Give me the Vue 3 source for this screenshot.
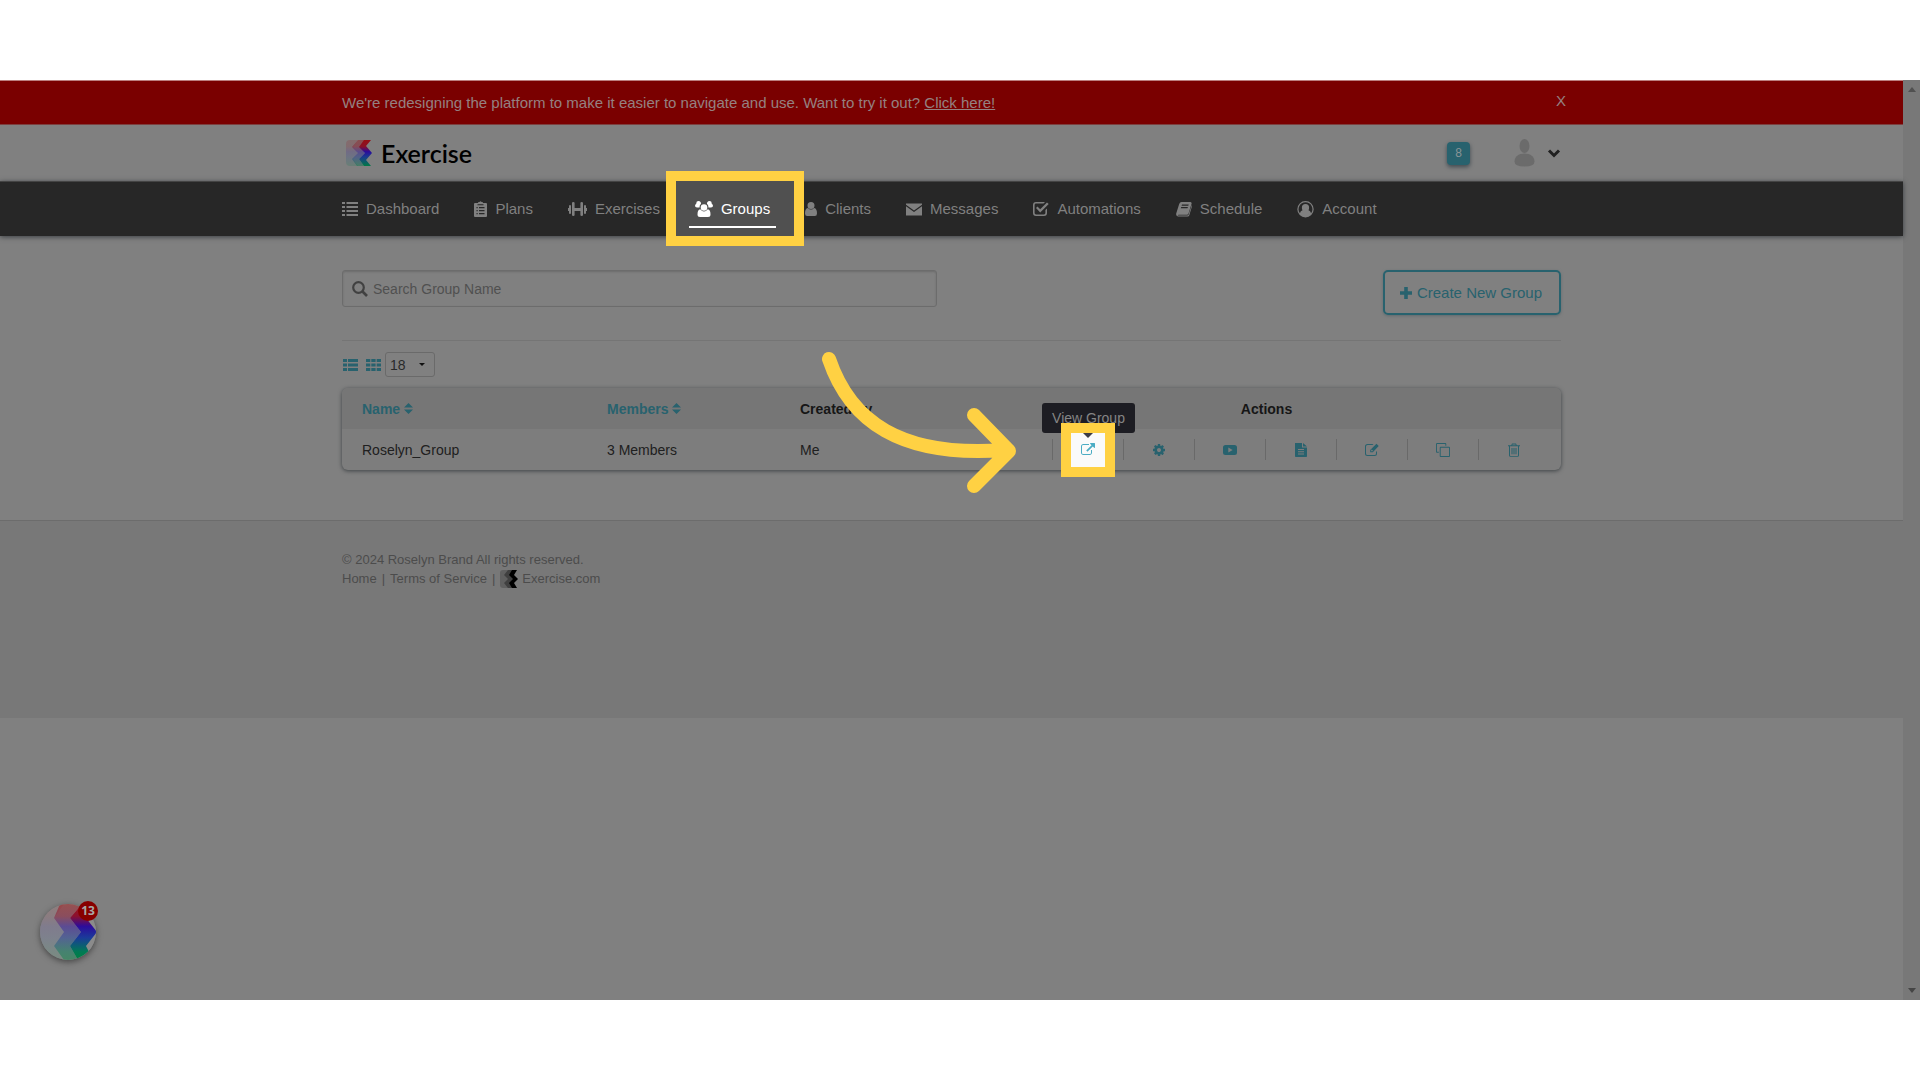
<script setup>
import { ref } from 'vue'

const search = ref('')
const perPage = ref('18')

const navItems = [
  { label: 'Dashboard', w: 16, icon: 'M0 1h3v2H0zM4.500 1H16v2H4.500zM0 5h3v2H0zM4.500 5H16v2H4.500zM0 9h3v2H0zM4.500 9H16v2H4.500zM0 13h3v2H0zM4.500 13H16v2H4.500z' },
  { label: 'Plans', w: 13, icon: 'M1 2h3.200V1h1.300a1.200 1.200 0 0 1 2 0h1.300v1H12a1 1 0 0 1 1 1v12a1 1 0 0 1-1 1H1a1 1 0 0 1-1-1V3a1 1 0 0 1 1-1zM2.500 6v1.200h1.200V6zM5 6v1.200h5.500V6zM2.500 9v1.200h1.200V9zM5 9v1.200h5.500V9zM2.500 12v1.200h1.200V12zM5 12v1.200h5.500V12zM3.500 3.300v1h6v-1z' },
  { label: 'Exercises', w: 19, icon: 'M0 7h1V5q0-1 1-1t1 1v7q0 1-1 1t-1-1v-2H0zM4 2q0-1 1.300-1T6.600 2v5h5.800V2q0-1 1.300-1T15 2v12q0 1-1.300 1T12.400 14V10H6.600v4q0 1-1.300 1T4 14zM16 5q0-1 1-1t1 1v2h1v3h-1v2q0 1-1 1t-1-1z' },
  { label: 'Groups', w: 18, active: true, icon: 'M9 3.200a3.300 3.300 0 1 1 0 6.600a3.300 3.300 0 0 1 0-6.600zM3.600 0a2.400 2.400 0 0 1 2.300 3.100q-1.600 1.400-1.300 3.400H2Q0 6.500 0 4.800Q.2 3 1.300 2.700A2.400 2.400 0 0 1 3.600 0zM14.400 0a2.400 2.400 0 0 0-2.300 3.100q1.600 1.400 1.300 3.400H16q2 0 2-1.700q-.2-1.800-1.300-2.100A2.400 2.400 0 0 0 14.400 0zM5.200 8.300Q9 12.800 12.800 8.300Q15.500 8.600 15.500 13.500Q15.500 16 13 16H5Q2.500 16 2.500 13.500Q2.500 8.600 5.200 8.300z' },
  { label: 'Clients', w: 12, icon: 'M6 1a3.500 3.500 0 1 1 0 7a3.500 3.500 0 0 1 0-7zM2.700 7Q6 10.200 9.300 7Q12 7.500 12 12.500Q12 15 9.800 15H2.200Q0 15 0 12.500Q0 7.500 2.700 7z' },
  { label: 'Messages', w: 16, icon: 'M0 2.500h16v1.300L8 9.500L0 3.800zM0 5.300L8 11l8-5.700V14.500H0z' },
  { label: 'Automations', w: 16, icon: 'M3 1h9l-1.500 1.600H3A1.400 1.400 0 0 0 1.600 4v8A1.400 1.400 0 0 0 3 13.400h8a1.400 1.400 0 0 0 1.400-1.400V9L14 7.400V12a3 3 0 0 1-3 3H3a3 3 0 0 1-3-3V4a3 3 0 0 1 3-3zM3 7l1.500-1.500L7.200 8.200L14 1.500L15.700 3L7.200 11.500z' },
  { label: 'Schedule', w: 16, icon: 'M5.500 1h9q1.500.3 1 2l-3 9.500q-.5 1.300-1.800 1.300H2.500q-1 0-.8.700h9.500q1.200 0 1.500-1.200L15.800 4q.4.600.1 1.600l-2.600 8.600Q12.900 15.500 11.500 15.500H2Q-.3 15 .2 12.500L3.200 3Q3.900 1 5.500 1zM6 3.500l-.4 1.200h6.700l.4-1.200zM5.200 6l-.4 1.200h6.700l.4-1.200z' },
  { label: 'Account', w: 17, icon: 'M8.500 0a8.200 8.200 0 1 1 0 16.400A8.200 8.200 0 0 1 8.500 0zM8.500 1.300a6.900 6.900 0 0 0-5.600 10.900Q3.500 9.500 5.500 9.200Q4.800 8 4.900 6.500A3.600 3.600 0 0 1 12.100 6.500Q12.200 8 11.500 9.200Q13.500 9.500 14.100 12.200A6.900 6.900 0 0 0 8.500 1.300z' },
]

const viewIcon = 'M1408 928v320q0 119-84.500 203.500t-203.500 84.500h-832q-119 0-203.500-84.500t-84.500-203.500v-832q0-119 84.500-203.500t203.500-84.500h704q14 0 23 9t9 23v64q0 14-9 23t-23 9h-704q-66 0-113 47t-47 113v832q0 66 47 113t113 47h832q66 0 113-47t47-113v-320q0-14 9-23t23-9h64q14 0 23 9t9 23zm384-864v512q0 26-19 45t-45 19-45-19l-176-176-652 652q-10 10-23 10t-23-10l-114-114q-10-10-10-23t10-23l652-652-176-176q-19-19-19-45t19-45 45-19h512q26 0 45 19t19 45z'

const actions = [
  { label: 'View Group', box: '0 0 1792 1792', d: viewIcon, highlighted: true },
  { label: 'Settings', box: '0 0 1792 1792', d: 'M1152 896q0-106-75-181t-181-75-181 75-75 181 75 181 181 75 181-75 75-181zm512-109v222q0 12-8 23t-20 13l-185 28q-19 54-39 91 35 50 107 138 10 12 10 25t-9 23q-27 37-99 108t-94 71q-12 0-26-9l-138-108q-44 23-91 38-16 136-29 186-7 28-36 28h-222q-14 0-24.500-8.500t-11.500-21.500l-28-184q-49-16-90-37l-141 107q-10 9-25 9-14 0-25-11-126-114-165-168-7-10-7-23 0-12 8-23 15-21 51-66.500t54-70.500q-27-50-41-99l-183-27q-13-2-21-12.500t-8-23.500v-222q0-12 8-23t19-13l186-28q14-46 39-92-40-57-107-138-10-12-10-24 0-10 9-23 26-36 98.500-107.500t94.500-71.500q13 0 26 10l138 107q44-23 91-38 16-136 29-186 7-28 36-28h222q14 0 24.500 8.500t11.500 21.500l28 184q49 16 90 37l142-107q9-9 24-9 13 0 25 10 129 119 165 170 7 8 7 22 0 12-8 23-15 21-51 66.500t-54 70.500q26 50 41 98l183 28q13 2 21 12.500t8 23.500z' },
  { label: 'Videos', box: '0 0 14 14', d: 'M2.500 2h9Q14 2 14 4.500v5Q14 12 11.500 12h-9Q0 12 0 9.500v-5Q0 2 2.500 2zM5.300 4.500v5L9.700 7z' },
  { label: 'Report', box: '0 0 14 14', d: 'M1 0h7v4.500h5V13.200q0 .8-.8.800H1.800Q1 14 1 13.200zM9 0l4 3.600H9zM4 6v1h6V6zM4 8.300v1h6v-1zM4 10.600v1h6v-1z' },
  { label: 'Edit', box: '0 0 14 14', d: 'M2.500 1H8.500L7.500 2H2.500A1.500 1.500 0 0 0 1 3.500v7A1.500 1.500 0 0 0 2.500 12h7A1.500 1.500 0 0 0 11 10.500V9l1-1v2.500A2.500 2.500 0 0 1 9.500 13h-7A2.500 2.500 0 0 1 0 10.500v-7A2.500 2.500 0 0 1 2.500 1zM11.500.800L13.700 3L7.800 9.300H5.200V6.900zM6.200 7.200v1.100h1.200l.6-.6L6.800 6.600z' },
  { label: 'Copy', box: '0 0 15 15', d: 'M1.500 0h8.500q1 0 1 1v2h-1V1H1v8.500h2v1H1q-1 0-1-1V1Q0 0 1.500 0zM5 4h9q1 0 1 1v9q0 1-1 1H5q-1 0-1-1V5q0-1 1-1zM5 5v9h9V5z' },
  { label: 'Delete', box: '0 0 14 14', d: 'M5 .500h4l.8 1.700H13v1h-1v9q0 1.600-1.400 1.600H3.400Q2 13.800 2 12.200v-9H1v-1h3.200zM5.600 1.400l-.4.800h3.600l-.4-.8zM3 3.200v9q0 .7.500.7h7q.5 0 .5-.7v-9zM4.500 5h1v6.200h-1zM6.500 5h1v6.200h-1zM8.500 5h1v6.200h-1z' },
]
</script>

<template>
  <div class="page">
    <div class="screen">
      <div class="app">
        <div class="banner">
          <div class="container banner-row">
            <p>We're redesigning the platform to make it easier to navigate and use. Want to try it out? <a href="#">Click here!</a></p>
            <button class="plain close" type="button">X</button>
          </div>
        </div>

        <header class="header">
          <div class="container header-row">
            <a class="brand" href="#">
              <svg width="26" height="26" viewBox="0 0 26 26" aria-hidden="true">
                <defs>
                  <linearGradient id="ribbon" x1="0" y1="0" x2="0" y2="1">
                    <stop offset="0" stop-color="#960f14" />
                    <stop offset=".25" stop-color="#8a1026" />
                    <stop offset=".45" stop-color="#2a0c9c" />
                    <stop offset=".65" stop-color="#1a3a90" />
                    <stop offset="1" stop-color="#007a45" />
                  </linearGradient>
                </defs>
                <path d="M4 0H12L7 7L12 13L7 19L12 26H4Q0 26 0 22V4Q0 0 4 0z" fill="url(#ribbon)" opacity=".18" />
                <path d="M12 0H20L14 7L19 13L13 19L18 26H11L6 19L12 13L6 7z" fill="url(#ribbon)" opacity=".45" />
                <path d="M18 0H25L20 6L26 13L20 20L25 26H18L13 19L19 13L13 7z" fill="url(#ribbon)" />
              </svg>
              <span>Exercise</span>
            </a>
            <div class="account">
              <button class="count" type="button">8</button>
              <button class="plain profile" type="button" aria-label="Profile menu">
                <svg width="21" height="28" viewBox="0 0 20 28" fill="#6b6b6b"><ellipse cx="10" cy="7" rx="5" ry="7" /><path d="M10 14.500C16 14.500 20 17.500 20 22.500Q20 27.500 10 27.500T0 22.500C0 17.500 4 14.500 10 14.500z" /></svg>
                <svg width="14" height="9" viewBox="0 0 13 9"><path d="M1.500 1.500L6.500 6.500L11.500 1.500" fill="none" stroke="#202020" stroke-width="3" /></svg>
              </button>
            </div>
          </div>
        </header>

        <nav class="nav">
          <ul class="container">
            <li v-for="item in navItems" :key="item.label" :class="{ active: item.active }">
              <a href="#">
                <svg :width="item.w" height="17" :viewBox="`0 0 ${item.w} 17`" aria-hidden="true"><path :d="item.icon" fill="currentColor" fill-rule="evenodd" /></svg>
                <span>{{ item.label }}</span>
              </a>
            </li>
          </ul>
        </nav>

        <main class="container">
          <div class="toolbar">
            <label class="search">
              <svg width="16" height="16" viewBox="0 0 16 16" aria-hidden="true"><circle cx="6.500" cy="6.500" r="5.300" fill="none" stroke="#414141" stroke-width="2.200" /><path d="M10.500 10.500L15 15" stroke="#414141" stroke-width="2.600" /></svg>
              <input v-model="search" type="text" placeholder="Search Group Name" aria-label="Search Group Name" />
            </label>
            <button class="create" type="button">
              <svg width="12" height="12" viewBox="0 0 10 10" aria-hidden="true"><path d="M3.500 0h3v3.500H10v3H6.500V10h-3V6.500H0v-3h3.500z" fill="currentColor" /></svg>
              Create New Group
            </button>
          </div>

          <div class="views">
            <button class="plain" type="button" aria-label="List view">
              <svg width="15" height="12" viewBox="0 0 15 12"><path d="M0 0h4v3H0zM5 0h10v3H5zM0 4.500h4v3H0zM5 4.500h10v3H5zM0 9h4v3H0zM5 9h10v3H5z" fill="currentColor" /></svg>
            </button>
            <button class="plain" type="button" aria-label="Grid view">
              <svg width="15" height="12" viewBox="0 0 15 12"><path d="M0 0h4.300v3H0zM5.300 0h4.300v3H5.300zM10.700 0H15v3h-4.300zM0 4.500h4.300v3H0zM5.300 4.500h4.300v3H5.300zM10.700 4.500H15v3h-4.300zM0 9h4.300v3H0zM5.300 9h4.300v3H5.300zM10.700 9H15v3h-4.300z" fill="currentColor" /></svg>
            </button>
            <div class="per-page">
              <select v-model="perPage" aria-label="Groups per page">
                <option>18</option>
                <option>36</option>
              </select>
            </div>
          </div>

          <div class="card">
            <table>
              <thead>
                <tr>
                  <th class="name"><a href="#">Name <svg width="9" height="11" viewBox="0 0 9 11"><path d="M0 4.500L4.500 0L9 4.500zM0 6.500h9L4.500 11z" fill="currentColor" /></svg></a></th>
                  <th class="members"><a href="#">Members <svg width="9" height="11" viewBox="0 0 9 11"><path d="M0 4.500L4.500 0L9 4.500zM0 6.500h9L4.500 11z" fill="currentColor" /></svg></a></th>
                  <th>Created by</th>
                  <th class="actions-head">Actions</th>
                </tr>
              </thead>
              <tbody>
                <tr>
                  <td>Roselyn_Group</td>
                  <td>3 Members</td>
                  <td>Me</td>
                  <td>
                    <div class="actions">
                      <div v-for="action in actions" :key="action.label" class="action" :class="{ spot: action.highlighted }">
                        <span v-if="action.highlighted" class="tooltip" role="tooltip">View Group</span>
                        <button class="plain" type="button" :aria-label="action.label">
                          <svg width="14" height="14" :viewBox="action.box"><path :d="action.d" fill="currentColor" fill-rule="evenodd" /></svg>
                        </button>
                      </div>
                    </div>
                  </td>
                </tr>
              </tbody>
            </table>
            <svg class="pointer" width="196" height="144" viewBox="0 0 196 144" aria-hidden="true">
              <path d="M9 8C30 70 80 107 185 99M154 64L189 100L154 135" fill="none" stroke="#ffd143" stroke-width="14" stroke-linecap="round" stroke-linejoin="round" />
            </svg>
          </div>
        </main>

        <footer class="footer">
          <div class="container">
            <p>© 2024 Roselyn Brand All rights reserved.</p>
            <p class="links">
              <a href="#">Home</a> | <a href="#">Terms of Service</a> |
              <a class="mark" href="#"><svg width="18" height="18" viewBox="0 0 18 18" aria-hidden="true"><path d="M3 0H9V18H3Q0 18 0 15V3Q0 0 3 0z" fill="#606060" /><path d="M8 0H15L11 5L14 9L10 13L14 18H8L4 13L8 9L4 5z" fill="#404040" /><path d="M12 0H17L14 5L18 9L14 13L17 18H12L9 13L13 9L9 5z" fill="#000" /></svg>Exercise.com</a>
            </p>
          </div>
        </footer>

        <button class="plain chat" type="button" aria-label="Open messages">
          <svg width="56" height="56" viewBox="0 0 56 56" aria-hidden="true">
            <defs>
              <clipPath id="disc"><circle cx="28" cy="28" r="28" /></clipPath>
              <linearGradient id="chatRibbon" x1="0" y1="0" x2="0" y2="1">
                <stop offset="0" stop-color="#a31515" />
                <stop offset=".22" stop-color="#8a1030" />
                <stop offset=".4" stop-color="#2c0c9c" />
                <stop offset=".6" stop-color="#1b3a9a" />
                <stop offset=".85" stop-color="#007a55" />
                <stop offset="1" stop-color="#008040" />
              </linearGradient>
            </defs>
            <g clip-path="url(#disc)">
              <path d="M0 0H56V56H0z" fill="#8b8b8b" />
              <path d="M0 0H24L14 14L24 28L14 42L24 56H0z" fill="url(#chatRibbon)" opacity=".12" />
              <path d="M20 0H42L30 14L41 28L30 42L38 56H24L14 42L24 28L14 14z" fill="url(#chatRibbon)" opacity=".5" />
              <path d="M42 0H56L46 14L57 28L46 42L50 50L42 56H38L30 42L41 28L30 14z" fill="url(#chatRibbon)" />
            </g>
          </svg>
          <span class="unread">13</span>
        </button>
      </div>

      <div class="scrollbar" aria-hidden="true">
        <svg width="8" height="5" viewBox="0 0 8 5"><path d="M0 5L4 0L8 5z" fill="#505050" /></svg>
        <svg width="8" height="5" viewBox="0 0 8 5"><path d="M0 0L4 5L8 0z" fill="#454545" /></svg>
      </div>
    </div>
  </div>
</template>

<style>
body {
  margin: 0;
  background: #fff;
}
</style>

<style scoped>
*,
*::before,
*::after {
  box-sizing: border-box;
}

.page {
  padding: 80px 0;
  font-family: "Liberation Sans", Arial, sans-serif;
  font-size: 14px;
  line-height: 20px;
  color: #202020;
}

.screen {
  display: flex;
  min-height: calc(100vh - 160px);
  background: #808080;
}

.app {
  position: relative;
  flex: 1;
  min-width: 0;
}

.scrollbar {
  display: flex;
  flex-direction: column;
  justify-content: space-between;
  align-items: center;
  width: 17px;
  padding: 7px 0;
  background: #787878;
}

.container {
  width: 100%;
  max-width: 1219px;
  margin: 0 auto;
}

p {
  margin: 0;
}

a {
  color: inherit;
  text-decoration: none;
}

svg {
  display: block;
  flex: none;
}

button,
input,
select {
  font: inherit;
}

.plain {
  padding: 0;
  border: 0;
  background: none;
  color: inherit;
}

.banner {
  border-top: 1px solid #bc7f7f;
  border-bottom: 1px solid #7d4040;
  background: #7a0000;
  font-size: 15px;
  color: #958080;
}

.banner-row {
  display: flex;
  justify-content: space-between;
  height: 43px;
  padding-top: 12px;
}

.banner a {
  text-decoration: underline;
}

.close {
  align-self: flex-start;
  margin: -2px -5px 0 0;
}

.header-row {
  display: flex;
  justify-content: space-between;
  align-items: center;
  height: 56px;
}

.brand {
  display: flex;
  align-items: center;
  gap: 9px;
  padding-left: 4px;
  font-family: Lato, sans-serif;
  font-size: 25px;
  font-weight: 600;
  line-height: 28px;
  color: #000;
}

.account {
  display: flex;
  align-items: center;
  gap: 44px;
}

.count {
  width: 23px;
  height: 23px;
  padding: 0;
  border: 0;
  border-radius: 4px;
  background: #28626e;
  box-shadow: 0 2px 4px #404a50;
  font-size: 12px;
  color: #8a9496;
}

.profile {
  display: flex;
  align-items: center;
  gap: 12px;
}

.nav {
  border-top: 1px solid #444;
  background: #272727;
  box-shadow: 0 1px 5px #3a3e42;
  font-size: 15px;
  color: #808080;
}

.nav ul {
  display: flex;
  gap: 35px;
  padding: 0;
  list-style: none;
}

.nav a {
  display: flex;
  align-items: center;
  gap: 8px;
  height: 54px;
}

.nav li.active {
  position: relative;
  z-index: 1;
  color: #fff;
}

.nav li.active::before {
  content: "";
  position: absolute;
  z-index: -1;
  inset: -11px -34px -10px -29px;
  border: 10px solid #ffd143;
  background: #505050;
}

.nav li.active::after {
  content: "";
  position: absolute;
  right: -6px;
  bottom: 8px;
  left: -6px;
  height: 2px;
  background: #fff;
}

.toolbar {
  display: flex;
  justify-content: space-between;
  align-items: flex-start;
  padding: 34px 0 25px;
  border-bottom: 1px solid #757575;
}

.search {
  display: flex;
  align-items: center;
  gap: 5px;
  width: 595px;
  height: 37px;
  padding: 0 9px;
  border: 1px solid #6c6c6c;
  border-radius: 3px;
  box-shadow: inset 0 1px 2px #6c6c6c;
}

.search input {
  flex: 1;
  min-width: 0;
  padding: 0;
  border: 0;
  outline: 0;
  background: none;
  color: #202020;
}

.search input::placeholder {
  color: #505050;
  opacity: 1;
}

.create {
  display: flex;
  align-items: center;
  gap: 5px;
  height: 45px;
  padding: 0 17px 0 15px;
  border: 2px solid #28626e;
  border-radius: 5px;
  background: none;
  box-shadow: 0 1px 3px #606a6e;
  font-size: 15px;
  color: #28626e;
}

.views {
  display: flex;
  align-items: center;
  gap: 8px;
  padding: 11px 0 11px 1px;
  color: #28626e;
}

.per-page {
  display: flex;
  position: relative;
  margin-left: -4px;
}

.per-page select {
  width: 50px;
  height: 25px;
  padding: 0 4px;
  appearance: none;
  border: 1px solid #6a6a6a;
  border-radius: 3px;
  background: none;
  color: #2a2a2a;
}

.per-page::after {
  content: "";
  position: absolute;
  top: 11px;
  right: 10px;
  border: 3px solid transparent;
  border-top-color: #101010;
  border-bottom: 0;
}

.card {
  position: relative;
  border-radius: 6px;
  background: #7d7d7d;
  box-shadow: 0 1px 4px #3c4144;
}

table {
  width: 100%;
  table-layout: fixed;
  border-spacing: 0;
}

th {
  height: 41px;
  padding: 0;
  background: #767676;
  font-weight: 700;
  text-align: left;
  color: #161616;
}

th:first-child {
  border-radius: 6px 0 0 0;
}

th:last-child {
  border-radius: 0 6px 0 0;
}

td {
  height: 41px;
  padding: 0;
}

th:first-child,
td:first-child {
  padding-left: 20px;
}

th a {
  display: flex;
  align-items: center;
  gap: 4px;
  color: #28626e;
}

th.name {
  width: 265px;
}

th.members {
  width: 193px;
}

th.actions-head {
  width: 509px;
  padding-right: 80px;
  text-align: center;
}

.actions {
  display: flex;
}

.action {
  display: flex;
  position: relative;
  justify-content: center;
  align-items: center;
  width: 71px;
  height: 21px;
  border-left: 1px solid #696969;
  color: #28626e;
}

.action .plain {
  position: relative;
}

.action.spot {
  color: #4bacc4;
}

.action.spot::before {
  content: "";
  position: absolute;
  z-index: 1;
  top: -16px;
  left: 8px;
  width: 54px;
  height: 54px;
  border: 10px solid #ffd143;
  background: #fafafa;
}

.action.spot::after {
  content: "";
  position: absolute;
  z-index: 2;
  top: -6px;
  left: 30px;
  border: 5px solid transparent;
  border-top-color: #3c3c46;
  border-bottom: 0;
}

.action.spot .plain {
  z-index: 2;
}

.tooltip {
  position: absolute;
  top: -36px;
  left: -11px;
  width: 93px;
  height: 30px;
  border-radius: 3px;
  background: #1d1d23;
  line-height: 31px;
  text-align: center;
  color: #858585;
}

.pointer {
  position: absolute;
  top: -37px;
  left: 478px;
}

.footer {
  min-height: 198px;
  margin-top: 50px;
  padding-top: 29px;
  border-top: 1px solid #6c6c6c;
  background: #787878;
  font-size: 13px;
  line-height: 19px;
  color: #4c4c4c;
}

.links {
  display: flex;
  align-items: center;
  gap: 5px;
}

.mark {
  display: flex;
  align-items: center;
  gap: 4px;
}

.chat {
  position: absolute;
  bottom: 40px;
  left: 40px;
  width: 56px;
  height: 56px;
  border-radius: 50%;
  box-shadow: 0 2px 6px #454545;
}

.unread {
  position: absolute;
  top: -3px;
  right: -2px;
  width: 20px;
  height: 20px;
  border-radius: 50%;
  background: #870000;
  font-family: "Noto Sans", sans-serif;
  font-size: 12px;
  font-weight: 700;
  line-height: 20px;
  text-align: center;
  color: #a8a8a8;
}
</style>
